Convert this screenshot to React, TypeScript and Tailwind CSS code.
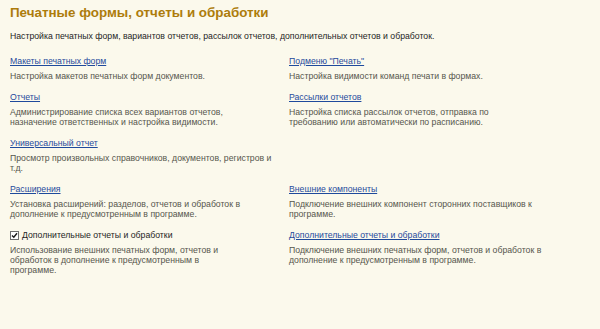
import { ReactNode } from 'react';

type Item = {
  title: string;
  lines: string[];
  checkbox?: boolean;
};

const rows: [Item, Item | null][] = [
  [
    { title: 'Макеты печатных форм', lines: ['Настройка макетов печатных форм документов.'] },
    { title: 'Подменю "Печать"', lines: ['Настройка видимости команд печати в формах.'] },
  ],
  [
    {
      title: 'Отчеты',
      lines: [
        'Администрирование списка всех вариантов отчетов,',
        'назначение ответственных и настройка видимости.',
      ],
    },
    {
      title: 'Рассылки отчетов',
      lines: [
        'Настройка списка рассылок отчетов, отправка по',
        'требованию или автоматически по расписанию.',
      ],
    },
  ],
  [
    {
      title: 'Универсальный отчет',
      lines: ['Просмотр произвольных справочников, документов, регистров и', 'т.д.'],
    },
    null,
  ],
  [
    {
      title: 'Расширения',
      lines: [
        'Установка расширений: разделов, отчетов и обработок в',
        'дополнение к предусмотренным в программе.',
      ],
    },
    {
      title: 'Внешние компоненты',
      lines: ['Подключение внешних компонент сторонних поставщиков к', 'программе.'],
    },
  ],
  [
    {
      title: 'Дополнительные отчеты и обработки',
      checkbox: true,
      lines: [
        'Использование внешних печатных форм, отчетов и',
        'обработок в дополнение к предусмотренным в',
        'программе.',
      ],
    },
    {
      title: 'Дополнительные отчеты и обработки',
      lines: [
        'Подключение внешних печатных форм, отчетов и обработок в',
        'дополнение к предусмотренным в программе.',
      ],
    },
  ],
];

function CheckBox() {
  return (
    <span className="w-[9px] h-[9px] border border-[#6f6f6f] bg-white flex items-center justify-center shrink-0">
      <svg width="7" height="7" viewBox="0 0 7 7">
        <path d="M1 3.5 L2.8 5.3 L6 1.2" fill="none" stroke="#1a1a1a" strokeWidth="1.4" />
      </svg>
    </span>
  );
}

function Entry({ item }: { item: Item }) {
  let head: ReactNode;
  if (item.checkbox) {
    head = (
      <div className="flex items-center gap-[3px] h-[12px] text-[#1e1e1e]">
        <CheckBox />
        <span className="leading-[12px]">{item.title}</span>
      </div>
    );
  } else {
    head = (
      <div className="h-[12px] leading-[12px]">
        <a href="#" className="text-[#1f4a9c] underline underline-offset-[1px]">
          {item.title}
        </a>
      </div>
    );
  }
  return (
    <div className="pb-[10px]">
      {head}
      <div className="mt-[4px] text-[#56564c] leading-[10px]">
        {item.lines.map((l, i) => (
          <div key={i}>{l}</div>
        ))}
      </div>
    </div>
  );
}

export default function App() {
  return (
    <div
      className="w-[600px] h-[329px] bg-[#fbf9ec] px-[10px] pt-[4px] text-[8.7px] whitespace-nowrap overflow-hidden"
      style={{ fontFamily: '"Liberation Sans", Arial, sans-serif' }}
    >
      <h1 className="text-[13.4px] font-bold text-[#ad7c0b] leading-[18px]">
        Печатные формы, отчеты и обработки
      </h1>
      <p className="mt-[8px] text-[#1e1e1e] leading-[12px]">
        Настройка печатных форм, вариантов отчетов, рассылок отчетов, дополнительных отчетов и обработок.
      </p>
      <div className="mt-[13px] grid grid-cols-[279px_1fr]">
        {rows.map(([l, r], i) => (
          <div key={i} className="contents">
            <Entry item={l} />
            {r ? <Entry item={r} /> : <div />}
          </div>
        ))}
      </div>
    </div>
  );
}
